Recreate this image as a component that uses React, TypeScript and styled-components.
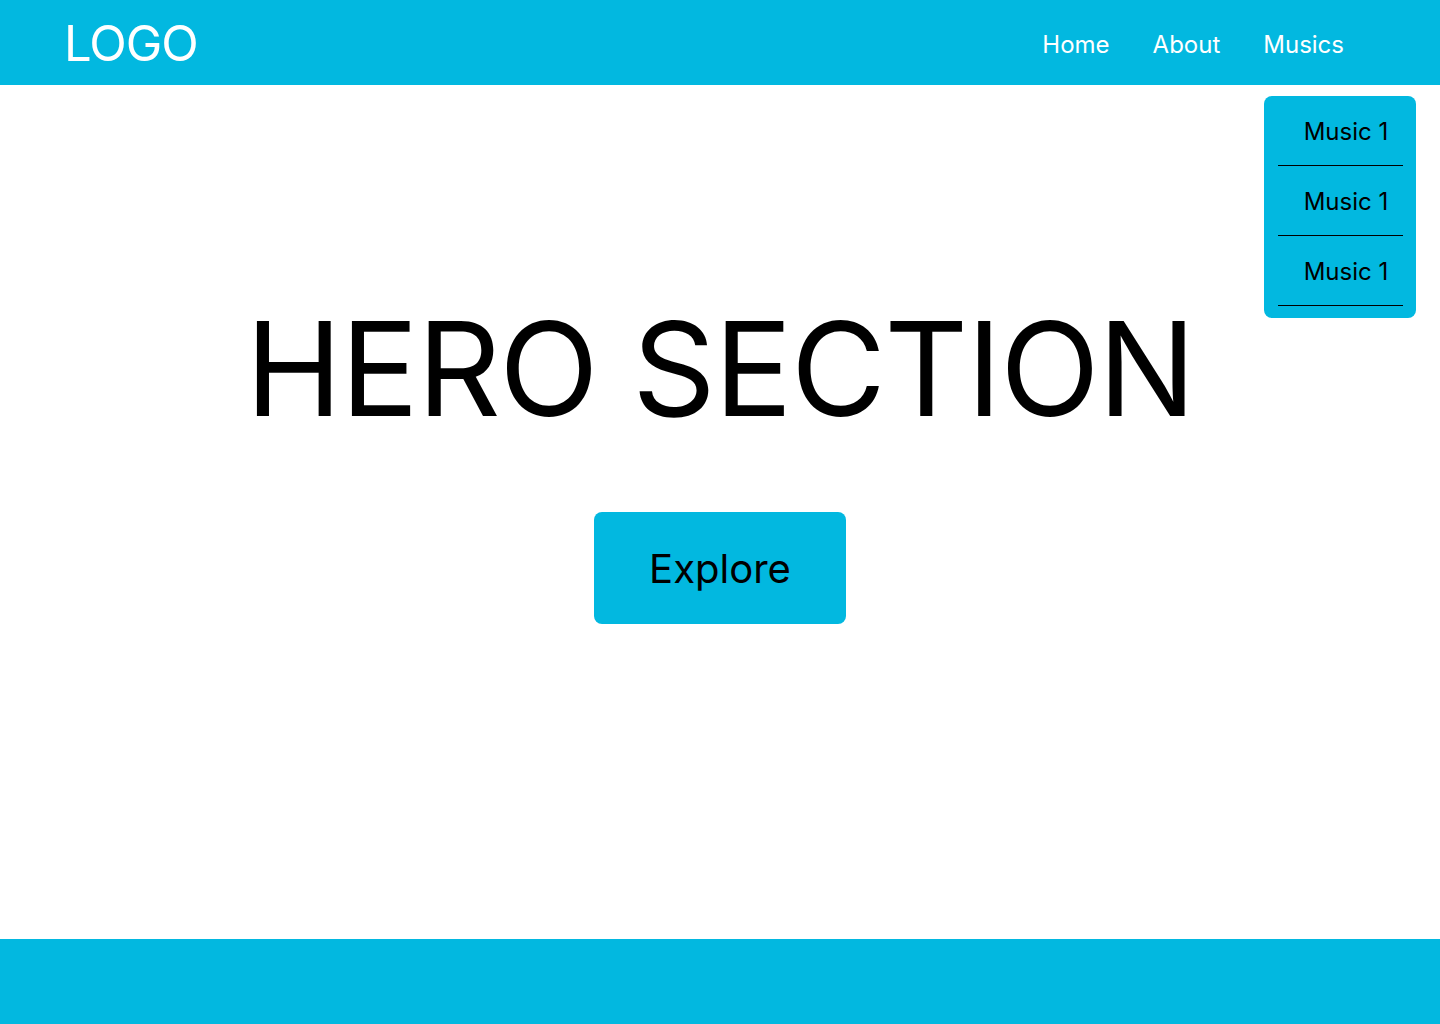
import React from "react";
import styled, { createGlobalStyle } from "styled-components";

const Global = createGlobalStyle`
  html, body { margin: 0; padding: 0; }
  body { font-family: Inter, "Noto Sans", sans-serif; background: #ffffff; color: #000; }
  * { box-sizing: border-box; }
`;

const BRAND = "#02B8E0";

const Page = styled.div`
  min-height: 100vh;
  display: flex;
  flex-direction: column;
`;

const Header = styled.header`
  height: 85px;
  background: ${BRAND};
  display: flex;
  align-items: center;
  justify-content: space-between;
  padding: 0 96px 0 64px;
`;

const Logo = styled.div`
  font-family: Inter, sans-serif;
  font-size: 49px;
  font-weight: 400;
  letter-spacing: -1px;
  color: #ffffff;
  line-height: 1;
  padding-top: 2px;
`;

const Nav = styled.nav`
  display: flex;
  align-items: center;
  gap: 43px;
  padding-top: 3px;
`;

const NavItem = styled.div`
  position: relative;
  font-size: 24px;
  color: #ffffff;
  line-height: 29px;
`;

const Dropdown = styled.div`
  position: absolute;
  top: 66px;
  left: 1px;
  width: 152px;
  background: ${BRAND};
  border-radius: 8px;
  padding: 0 13px 12px 14px;
  display: flex;
  flex-direction: column;
`;

const DropItem = styled.div`
  display: flex;
  justify-content: flex-end;
  padding: 21px 15px 19px 0;
  border-bottom: 1px solid #000;
  font-size: 24px;
  line-height: 29px;
  color: #000;
`;

const Main = styled.main`
  flex: 1;
  display: flex;
  flex-direction: column;
  align-items: center;
  padding-top: 205px;
`;

const HeroTitle = styled.h1`
  margin: 0;
  font-size: 130px;
  font-weight: 400;
  line-height: normal;
  letter-spacing: -1.5px;
`;

const ExploreButton = styled.button`
  margin-top: 65px;
  width: 252px;
  height: 112px;
  background: ${BRAND};
  border: none;
  border-radius: 8px;
  font-family: Inter, sans-serif;
  font-size: 40px;
  color: #000;
  cursor: pointer;
`;

const Footer = styled.footer`
  height: 85px;
  background: ${BRAND};
`;

export default function App() {
  return (
    <Page>
      <Global />
      <Header>
        <Logo>LOGO</Logo>
        <Nav>
          <NavItem>Home</NavItem>
          <NavItem>About</NavItem>
          <NavItem>
            Musics
            <Dropdown>
              <DropItem>Music 1</DropItem>
              <DropItem>Music 1</DropItem>
              <DropItem>Music 1</DropItem>
            </Dropdown>
          </NavItem>
        </Nav>
      </Header>
      <Main>
        <HeroTitle>HERO SECTION</HeroTitle>
        <ExploreButton>Explore</ExploreButton>
      </Main>
      <Footer />
    </Page>
  );
}
